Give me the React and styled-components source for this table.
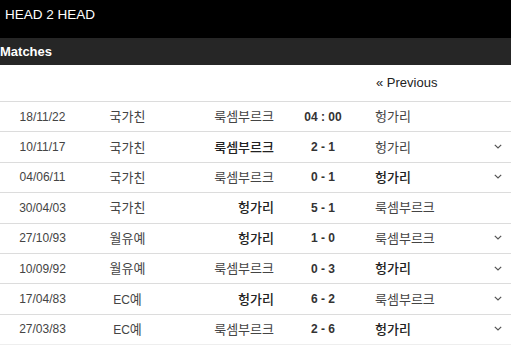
import React from "react";
import styled, { createGlobalStyle } from "styled-components";

const Global = createGlobalStyle`
  html, body { margin: 0; padding: 0; background: #fff; }
  body { font-family: "Liberation Sans", Arial, "Noto Sans CJK KR", sans-serif; }
`;

const Page = styled.div`
  width: 511px;
`;

const TitleBar = styled.div`
  height: 38px;
  box-sizing: border-box;
  background: #000;
  color: #fff;
  font-size: 13.5px;
  line-height: 20px;
  padding: 5px 5px 0;
`;

const SectionBar = styled.div`
  height: 27px;
  background: #262626;
  color: #fff;
  font-size: 13px;
  font-weight: bold;
  line-height: 27px;
`;

const grid = `
  display: grid;
  grid-template-columns: 85px 85px 110px 86px 119px 26px;
  align-items: center;
`;

const NavRow = styled.div`
  ${grid}
  height: 36px;
  font-size: 13px;
  color: #222;
`;

const NavLink = styled.span`
  grid-column: 5;
  padding-left: 10px;
  line-height: 16px;
`;

const Table = styled.div`
  border-bottom: 1px solid #eee;
`;

const Row = styled.div`
  ${grid}
  height: 30.4px;
  box-sizing: border-box;
  border-top: 1px solid #dcdcdc;
  font-size: 12px;
  line-height: 16px;
  color: #444;
`;

const Cell = styled.span`
  text-align: ${(p) => p.$align || "center"};
  padding-left: ${(p) => p.$pl || 0}px;
  padding-right: ${(p) => p.$pr || 0}px;
  font-weight: ${(p) => (p.$bold ? 500 : "normal")};
  color: ${(p) => (p.$bold ? "#222" : "#444")};
  white-space: nowrap;
`;

const Ko = styled.span`
  font-family: "Noto Sans CJK KR", sans-serif;
  font-size: 13px;
`;

const Score = styled.span`
  text-align: center;
  font-weight: bold;
  color: #333;
`;

const ChevronBox = styled.span`
  display: flex;
  justify-content: center;
  padding-bottom: 1px;
`;

const Chevron = () => (
  <svg width="8" height="5" viewBox="0 0 8 5">
    <polyline points="0.8,0.8 4,4 7.2,0.8" fill="none" stroke="#555" strokeWidth="1.2" />
  </svg>
);

const txt = (s) =>
  s.split(/([가-힣]+)/).map((part, i) =>
    /[가-힣]/.test(part) ? <Ko key={i}>{part}</Ko> : part
  );

const matches = [
  { d: "18/11/22", c: "국가친", h: "룩셈부르크", s: "04 : 00", a: "헝가리", w: null, x: false },
  { d: "10/11/17", c: "국가친", h: "룩셈부르크", s: "2 - 1", a: "헝가리", w: "h", x: true },
  { d: "04/06/11", c: "국가친", h: "룩셈부르크", s: "0 - 1", a: "헝가리", w: "a", x: true },
  { d: "30/04/03", c: "국가친", h: "헝가리", s: "5 - 1", a: "룩셈부르크", w: "h", x: false },
  { d: "27/10/93", c: "월유예", h: "헝가리", s: "1 - 0", a: "룩셈부르크", w: "h", x: true },
  { d: "10/09/92", c: "월유예", h: "룩셈부르크", s: "0 - 3", a: "헝가리", w: "a", x: true },
  { d: "17/04/83", c: "EC예", h: "헝가리", s: "6 - 2", a: "룩셈부르크", w: "h", x: true },
  { d: "27/03/83", c: "EC예", h: "룩셈부르크", s: "2 - 6", a: "헝가리", w: "a", x: true },
];

export default function App() {
  return (
    <Page>
      <Global />
      <TitleBar>HEAD 2 HEAD</TitleBar>
      <SectionBar>Matches</SectionBar>
      <NavRow>
        <NavLink>« Previous</NavLink>
      </NavRow>
      <Table>
        {matches.map((m, i) => (
          <Row key={i}>
            <Cell>{m.d}</Cell>
            <Cell>{txt(m.c)}</Cell>
            <Cell $align="right" $pr={6} $bold={m.w === "h"}>{txt(m.h)}</Cell>
            <Score>{m.s}</Score>
            <Cell $align="left" $pl={9} $bold={m.w === "a"}>{txt(m.a)}</Cell>
            <ChevronBox>{m.x ? <Chevron /> : null}</ChevronBox>
          </Row>
        ))}
      </Table>
    </Page>
  );
}
